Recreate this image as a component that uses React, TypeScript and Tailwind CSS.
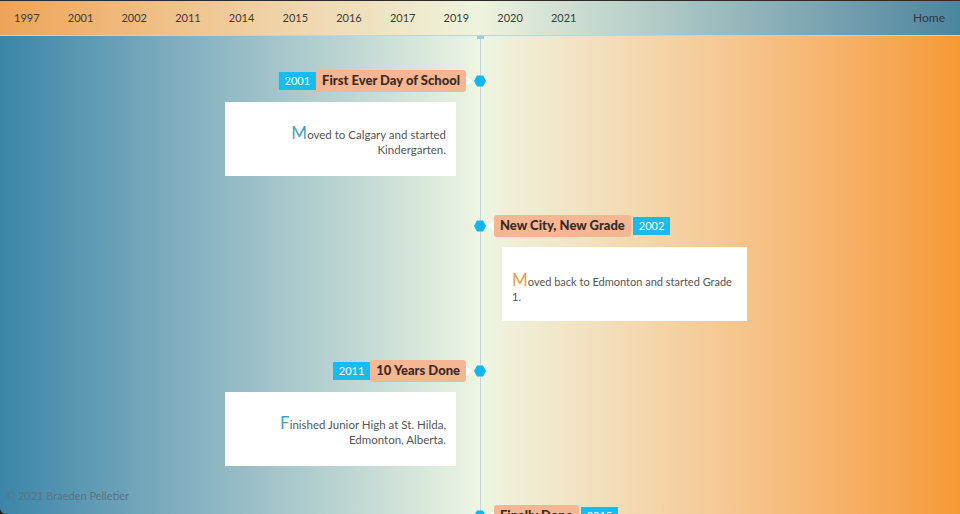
import { FC } from 'react'

interface Entry {
  year: string
  title: string
  text: string
  side: 'left' | 'right'
}

const years = ['1997', '2001', '2002', '2011', '2014', '2015', '2016', '2017', '2019', '2020', '2021']

const entries: Entry[] = [
  { year: '2001', title: 'First Ever Day of School', text: 'Moved to Calgary and started Kindergarten.', side: 'left' },
  { year: '2002', title: 'New City, New Grade', text: 'Moved back to Edmonton and started Grade 1.', side: 'right' },
  { year: '2011', title: '10 Years Done', text: 'Finished Junior High at St. Hilda, Edmonton, Alberta.', side: 'left' },
  { year: '2015', title: 'Finally Done', text: 'Graduated High School.', side: 'right' },
]

const Hex: FC = () => (
  <svg width="12" height="12" viewBox="0 0 12 12">
    <polygon points="3,0.5 9,0.5 12,6 9,11.5 3,11.5 0,6" fill="#10b6ef" />
  </svg>
)

const ArrowRight: FC = () => (
  <div className="h-0 w-0 border-y-[5px] border-l-[6px] border-y-transparent border-l-white" />
)

const ArrowLeft: FC = () => (
  <div className="h-0 w-0 border-y-[5px] border-r-[6px] border-y-transparent border-r-white" />
)

const Badge: FC<{ year: string }> = ({ year }) => (
  <div className="flex h-[18px] items-center bg-[#16bcf0] px-[6px] text-[11px] text-white">
    {year}
  </div>
)

const Title: FC<{ title: string }> = ({ title }) => (
  <div className="flex h-[22px] items-center rounded-[3px] bg-[#f5b693] px-[6px] text-[13px] font-black text-[#3b2a22]">
    {title}
  </div>
)

const Card: FC<{ entry: Entry }> = ({ entry }) => {
  const left = entry.side === 'left'
  return (
    <div
      className={
        left
          ? 'h-[74px] w-[231px] bg-white pl-[10px] pr-[10px] pt-[23px] text-right text-[11.5px] leading-[15px] text-[#555]'
          : 'h-[74px] w-[245px] bg-white pl-[10px] pr-[4px] pt-[25px] text-left text-[11px] leading-[15px] text-[#555]'
      }
    >
      <span className={left ? 'text-[17px] text-[#41a3c6]' : 'text-[17px] text-[#f09a46]'}>
        {entry.text[0]}
      </span>
      {entry.text.slice(1)}
    </div>
  )
}

const TimelineEntry: FC<{ entry: Entry }> = ({ entry }) => {
  const left = entry.side === 'left'
  return (
    <div className="mb-[39px]">
      <div className="grid h-[22px] grid-cols-[1fr_12px_1fr] items-center">
        <div className="flex items-center justify-end pr-[2px]">
          {left && (
            <>
              <Badge year={entry.year} />
              <Title title={entry.title} />
              <ArrowRight />
            </>
          )}
        </div>
        <Hex />
        <div className="flex items-center pl-[2px]">
          {!left && (
            <>
              <ArrowLeft />
              <Title title={entry.title} />
              <div className="ml-[2px]">
                <Badge year={entry.year} />
              </div>
            </>
          )}
        </div>
      </div>
      <div className="mt-[10px] grid grid-cols-[1fr_12px_1fr]">
        <div className="flex justify-end pr-[18px]">{left && <Card entry={entry} />}</div>
        <div />
        <div className="pl-[16px]">{!left && <Card entry={entry} />}</div>
      </div>
    </div>
  )
}

export default function App() {
  return (
    <div
      className="relative h-[514px] w-[960px] overflow-hidden bg-[#1e1e1e]"
      style={{ fontFamily: 'Lato, "Open Sans", sans-serif' }}
    >
      <div className="h-full overflow-hidden rounded-bl-[6px] border-t border-t-[#2e2a26] bg-gradient-to-r from-[#3a85a8] via-[#eef5e2] to-[#f59a33]">
        <header className="flex h-[35px] items-center border-b border-b-[#f0c89a] bg-gradient-to-r from-[#eea457] via-[#edf4de] to-[#4b859e] text-[11px] text-[#3f3a36]">
          {years.map((y) => (
            <div key={y} className="w-[53.7px] text-center">
              {y}
            </div>
          ))}
          <div className="ml-auto pr-[15px] text-[12px] text-[#2f3a40]">Home</div>
        </header>
        <main className="relative pt-[34px]">
          <div className="absolute bottom-0 left-[479.5px] top-0 w-px bg-[#c4d2d9]" />
          <div className="absolute left-[477px] top-0 h-[3px] w-[7px] bg-[#a9c9da]" />
          <div className="relative">
            {entries.map((e) => (
              <TimelineEntry key={e.year} entry={e} />
            ))}
          </div>
        </main>
      </div>
      <div className="absolute bottom-[10px] left-[6px] text-[11px] text-[#5a7480]">
        © 2021 Braeden Pelletier
      </div>
    </div>
  )
}
